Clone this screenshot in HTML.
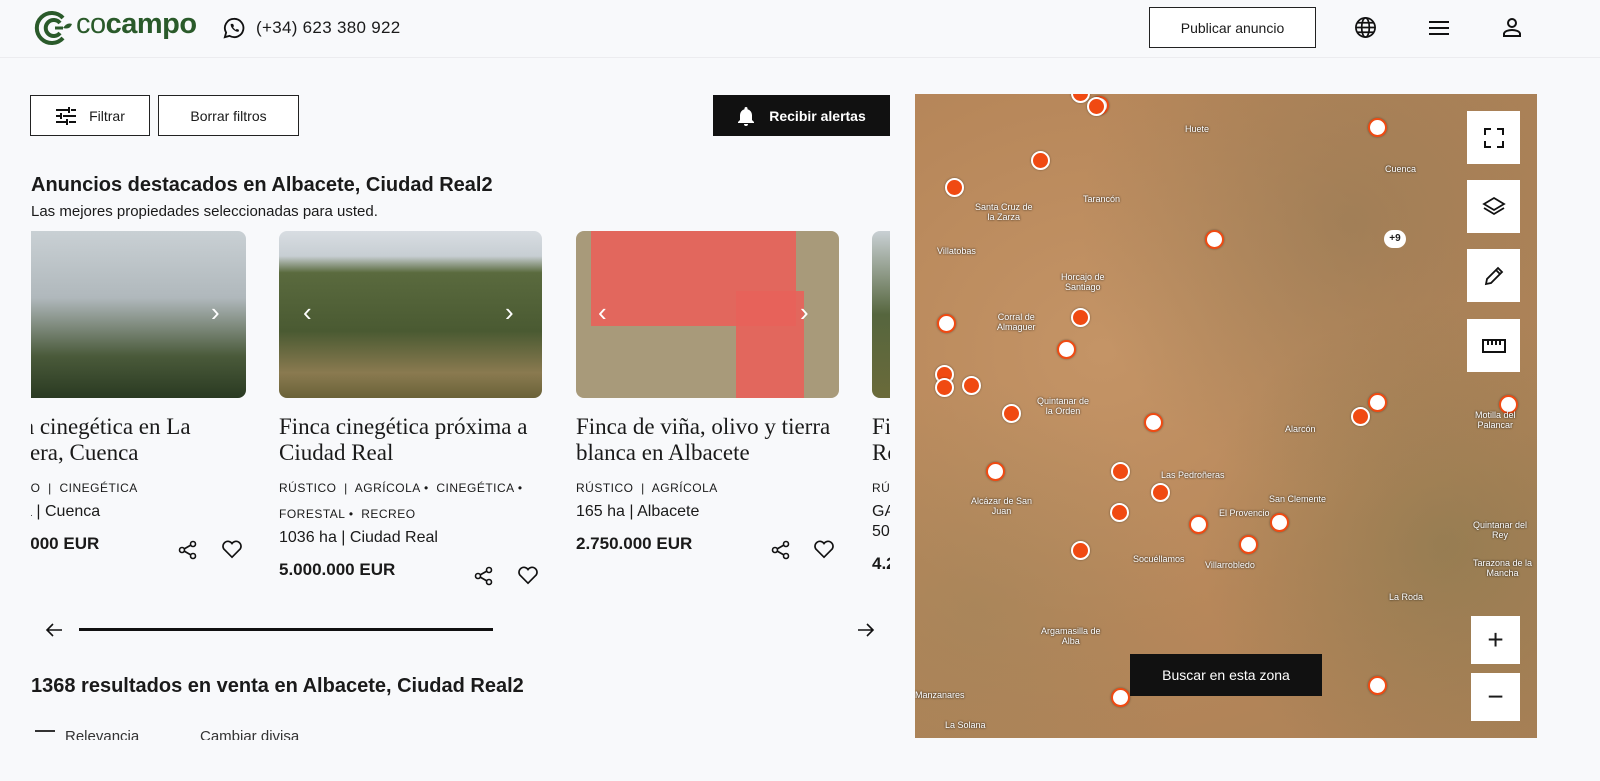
<!DOCTYPE html>
<html><head><meta charset="utf-8"><style>
*{box-sizing:border-box;margin:0;padding:0}
body{width:1600px;height:781px;overflow:hidden;background:#f8f9fb;font-family:"Liberation Sans",sans-serif;color:#1a1a1a;position:relative}
.hdr{position:absolute;left:0;top:0;width:1600px;height:58px;border-bottom:1px solid #ececef;background:#f8f9fb}
.abs{position:absolute}
.btn{position:absolute;border:1px solid #222;background:#fff;font-size:14px;display:flex;align-items:center;justify-content:center}
.card{position:absolute;top:231px;width:263px}
.img{height:167px;border-radius:8px;overflow:hidden;position:relative}
.t{font-family:"Liberation Serif",serif;font-size:23px;line-height:26px;margin-top:16px;white-space:nowrap}
.tag{font-size:12px;letter-spacing:.5px;margin-top:9px;line-height:26px}
.loc{font-size:16px;margin-top:2px}
.price{font-size:17px;font-weight:bold;margin-top:13px}
.m{position:absolute;width:19px;height:19px;border-radius:50%;background:#f04a12;border:2px solid #fff;box-shadow:0 0 2px rgba(0,0,0,.4)}
.w{background:#fff;border:2px solid #f04a12}
.lbl{position:absolute;font-size:9px;color:#fff;text-shadow:0 0 2px #000;text-align:center}
.mb{position:absolute;left:1467px;width:53px;height:53px;background:#fff;display:flex;align-items:center;justify-content:center}
.arr{position:absolute;color:#fff;font-size:26px;top:66px}
</style></head><body>
<div class="hdr">
 <svg class="abs" style="left:33px;top:9px" width="40" height="38" viewBox="0 0 40 38"><path d="M30 9A15 15 0 1 0 30 29" fill="none" stroke="#2a5a2a" stroke-width="4"/><path d="M27 14A8 8 0 1 0 27 24" fill="none" stroke="#2a5a2a" stroke-width="4"/><path d="M22 19h8" stroke="#2a5a2a" stroke-width="3"/><path d="M30 19q4-6 9-4q-2 6-9 4z" fill="#2a5a2a"/></svg>
 <div class="abs" style="left:76px;top:8px;font-size:29px;color:#2a5a2a;font-weight:bold;letter-spacing:-.5px"><span style="font-weight:normal">co</span>campo</div>
 <svg class="abs" style="left:223px;top:17px" width="22" height="22" viewBox="0 0 24 24"><path d="M12 2a10 10 0 0 0-8.6 15L2 22l5.2-1.4A10 10 0 1 0 12 2z" fill="none" stroke="#111" stroke-width="2"/><path d="M8.5 7.5c-.5 1.5.5 4 2.5 6s4.5 3 6 2.5l.5-2-2.5-1-1 1c-1-.5-2.5-2-3-3l1-1-1-2.5z" fill="#111"/></svg>
 <div class="abs" style="left:256px;top:18px;font-size:17px;letter-spacing:.3px">(+34) 623 380 922</div>
 <div class="btn" style="left:1149px;top:7px;width:167px;height:41px">Publicar anuncio</div>
 <svg class="abs" style="left:1354px;top:16px" width="23" height="23" viewBox="0 0 24 24" fill="none" stroke="#111" stroke-width="1.8"><circle cx="12" cy="12" r="10"/><ellipse cx="12" cy="12" rx="4" ry="10"/><path d="M2 12h20M3.5 7h17M3.5 17h17"/></svg>
 <svg class="abs" style="left:1428px;top:19px" width="22" height="18"><path d="M1 3h20M1 9h20M1 15h20" stroke="#111" stroke-width="2"/></svg>
 <svg class="abs" style="left:1502px;top:17px" width="20" height="20" viewBox="0 0 20 20"><circle cx="10" cy="6" r="4" fill="none" stroke="#111" stroke-width="2"/><path d="M2 19v-2c0-3 5-4 8-4s8 1 8 4v2z" fill="none" stroke="#111" stroke-width="2"/></svg>
</div>
<div class="btn" style="left:30px;top:95px;width:120px;height:41px"><svg width="22" height="18" style="margin-right:12px"><path d="M1 3h12M16 3h5M1 9h4M8 9h13M1 15h10M14 15h7M14 0v6M6 6v6M12 12v6" stroke="#111" stroke-width="2"/></svg>Filtrar</div>
<div class="btn" style="left:158px;top:95px;width:141px;height:41px">Borrar filtros</div>
<div class="btn" style="left:713px;top:95px;width:177px;height:41px;background:#111;color:#fff;border-color:#111;font-weight:bold"><svg width="18" height="20" viewBox="0 0 18 20" style="margin-right:14px"><path d="M9 1a1.5 1.5 0 0 1 1.5 1.5v.7A6 6 0 0 1 15 9v5l2 2v1H1v-1l2-2V9a6 6 0 0 1 4.5-5.8v-.7A1.5 1.5 0 0 1 9 1z M7 18h4a2 2 0 0 1-4 0z" fill="#fff"/></svg>Recibir alertas</div>
<div class="abs" style="left:31px;top:174px;font-size:20px;font-weight:bold">Anuncios destacados en Albacete, Ciudad Real2</div>
<div class="abs" style="left:31px;top:203px;font-size:15px">Las mejores propiedades seleccionadas para usted.</div>
<div class="abs" style="left:31px;top:231px;width:859px;height:360px;overflow:hidden">
 <div class="card" style="left:-48px;top:0"><div class="img" style="background:linear-gradient(#c9d0d4,#b0b8bc 40%,#4a5a3a 75%,#2a3a22)"><span class="arr" style="left:228px">›</span></div><div class="t">Finca cinegética en La<br>Toquera, Cuenca</div><div class="tag">RÚSTICO &nbsp;|&nbsp; CINEGÉTICA</div><div class="loc">500 ha | Cuenca</div><div class="price">1.000.000 EUR</div></div>
 <div class="card" style="left:248px;top:0"><div class="img" style="background:linear-gradient(#d8dde2,#c7ced3 15%,#5a6a3e 25%,#4a5a32 60%,#8a7a50 85%,#6a6238)"><span class="arr" style="left:24px">‹</span><span class="arr" style="left:226px">›</span></div><div class="t">Finca cinegética próxima a<br>Ciudad Real</div><div class="tag">RÚSTICO &nbsp;|&nbsp; AGRÍCOLA • &nbsp;CINEGÉTICA •<br>FORESTAL • &nbsp;RECREO</div><div class="loc">1036 ha | Ciudad Real</div><div class="price">5.000.000 EUR</div></div>
 <div class="card" style="left:545px;top:0"><div class="img" style="background:#a89a7a"><div class="abs" style="left:15px;top:0;width:205px;height:95px;background:#e8625a;opacity:.9"></div><div class="abs" style="left:160px;top:60px;width:68px;height:107px;background:#e8625a;opacity:.9"></div><span class="arr" style="left:22px">‹</span><span class="arr" style="left:224px">›</span></div><div class="t">Finca de viña, olivo y tierra<br>blanca en Albacete</div><div class="tag">RÚSTICO &nbsp;|&nbsp; AGRÍCOLA</div><div class="loc">165 ha | Albacete</div><div class="price">2.750.000 EUR</div></div>
 <div class="card" style="left:841px;top:0"><div class="img" style="background:linear-gradient(#c9d0d4,#56663e 50%,#6a6a3a)"></div><div class="t">Finca<br>Real</div><div class="tag">RÚSTICO</div><div class="loc">GA</div><div class="loc">500</div><div class="price">4.2</div></div>
</div>
<svg class="abs" style="left:178px;top:540px" width="20" height="20" viewBox="0 0 20 20" fill="none" stroke="#111" stroke-width="1.6"><circle cx="15" cy="4" r="2.5"/><circle cx="4" cy="10" r="2.5"/><circle cx="15" cy="16" r="2.5"/><path d="M6 9l7-4M6 11l7 4"/></svg>
<svg class="abs" style="left:221px;top:539px" width="22" height="20" viewBox="0 0 24 22"><path d="M12 20L3 11a5 5 0 0 1 9-6 5 5 0 0 1 9 6z" fill="none" stroke="#111" stroke-width="1.8"/></svg>
<svg class="abs" style="left:474px;top:566px" width="20" height="20" viewBox="0 0 20 20" fill="none" stroke="#111" stroke-width="1.6"><circle cx="15" cy="4" r="2.5"/><circle cx="4" cy="10" r="2.5"/><circle cx="15" cy="16" r="2.5"/><path d="M6 9l7-4M6 11l7 4"/></svg>
<svg class="abs" style="left:517px;top:565px" width="22" height="20" viewBox="0 0 24 22"><path d="M12 20L3 11a5 5 0 0 1 9-6 5 5 0 0 1 9 6z" fill="none" stroke="#111" stroke-width="1.8"/></svg>
<svg class="abs" style="left:771px;top:540px" width="20" height="20" viewBox="0 0 20 20" fill="none" stroke="#111" stroke-width="1.6"><circle cx="15" cy="4" r="2.5"/><circle cx="4" cy="10" r="2.5"/><circle cx="15" cy="16" r="2.5"/><path d="M6 9l7-4M6 11l7 4"/></svg>
<svg class="abs" style="left:813px;top:539px" width="22" height="20" viewBox="0 0 24 22"><path d="M12 20L3 11a5 5 0 0 1 9-6 5 5 0 0 1 9 6z" fill="none" stroke="#111" stroke-width="1.8"/></svg>
<svg class="abs" style="left:44px;top:620px" width="20" height="20"><path d="M18 10H3M9 4l-6 6 6 6" fill="none" stroke="#111" stroke-width="1.6"/></svg>
<div class="abs" style="left:79px;top:628px;width:414px;height:3px;background:#111"></div>
<svg class="abs" style="left:856px;top:620px" width="20" height="20"><path d="M2 10h15M11 4l6 6-6 6" fill="none" stroke="#111" stroke-width="1.6"/></svg>
<div class="abs" style="left:31px;top:675px;font-size:20px;font-weight:bold">1368 resultados en venta en Albacete, Ciudad Real2</div>
<div class="abs" style="left:31px;top:730px;width:400px;height:10px;overflow:hidden;font-size:15px;color:#333"><span style="position:absolute;left:4px;top:0;width:20px;height:2px;background:#333"></span><span style="position:absolute;left:34px;top:-2px">Relevancia</span><span style="position:absolute;left:169px;top:-2px">Cambiar divisa</span></div>
<div class="abs" style="left:915px;top:94px;width:622px;height:644px;overflow:hidden;background:radial-gradient(ellipse at 30% 40%,#c49466,#b7875a 50%,#a98056);">
 <div class="abs" style="left:0;top:0;width:622px;height:644px;background:radial-gradient(circle at 70% 20%,rgba(120,110,80,.35),transparent 40%),radial-gradient(circle at 85% 70%,rgba(100,110,70,.35),transparent 35%),radial-gradient(circle at 10% 80%,rgba(140,130,90,.3),transparent 30%)"></div>
 <div class="m" style="left:156px;top:-10px"></div><div class="m w" style="left:175px;top:2px"></div><div class="m" style="left:172px;top:3px"></div>
 <div class="m w" style="left:453px;top:24px"></div><div class="m" style="left:116px;top:57px"></div><div class="m" style="left:30px;top:84px"></div>
 <div class="m w" style="left:290px;top:136px"></div><div class="m" style="left:156px;top:214px"></div><div class="m w" style="left:22px;top:220px"></div>
 <div class="m w" style="left:142px;top:246px"></div><div class="m" style="left:20px;top:271px"></div><div class="m" style="left:20px;top:284px"></div><div class="m" style="left:47px;top:282px"></div>
 <div class="m" style="left:87px;top:310px"></div><div class="m w" style="left:229px;top:319px"></div><div class="m w" style="left:453px;top:299px"></div><div class="m" style="left:436px;top:313px"></div><div class="m w" style="left:584px;top:301px"></div>
 <div class="m w" style="left:71px;top:368px"></div><div class="m" style="left:196px;top:368px"></div><div class="m" style="left:236px;top:389px"></div><div class="m" style="left:195px;top:409px"></div>
 <div class="m w" style="left:274px;top:421px"></div><div class="m w" style="left:355px;top:419px"></div><div class="m w" style="left:324px;top:441px"></div><div class="m" style="left:156px;top:447px"></div>
 <div class="m w" style="left:453px;top:582px"></div><div class="m w" style="left:196px;top:594px"></div>
 <div class="abs" style="left:469px;top:136px;width:22px;height:18px;border-radius:9px;background:#fff;font-size:10px;font-weight:bold;text-align:center;line-height:18px">+9</div>
 <div class="lbl" style="left:270px;top:30px">Huete</div><div class="lbl" style="left:470px;top:70px">Cuenca</div><div class="lbl" style="left:60px;top:108px">Santa Cruz de<br>la Zarza</div><div class="lbl" style="left:168px;top:100px">Tarancón</div>
 <div class="lbl" style="left:22px;top:152px">Villatobas</div><div class="lbl" style="left:146px;top:178px">Horcajo de<br>Santiago</div><div class="lbl" style="left:82px;top:218px">Corral de<br>Almaguer</div>
 <div class="lbl" style="left:122px;top:302px">Quintanar de<br>la Orden</div><div class="lbl" style="left:560px;top:316px">Motilla del<br>Palancar</div><div class="lbl" style="left:370px;top:330px">Alarcón</div>
 <div class="lbl" style="left:246px;top:376px">Las Pedroñeras</div><div class="lbl" style="left:354px;top:400px">San Clemente</div><div class="lbl" style="left:56px;top:402px">Alcázar de San<br>Juan</div><div class="lbl" style="left:304px;top:414px">El Provencio</div>
 <div class="lbl" style="left:218px;top:460px">Socuéllamos</div><div class="lbl" style="left:290px;top:466px">Villarrobledo</div><div class="lbl" style="left:558px;top:426px">Quintanar del<br>Rey</div><div class="lbl" style="left:558px;top:464px">Tarazona de la<br>Mancha</div>
 <div class="lbl" style="left:474px;top:498px">La Roda</div><div class="lbl" style="left:126px;top:532px">Argamasilla de<br>Alba</div><div class="lbl" style="left:0;top:596px">Manzanares</div><div class="lbl" style="left:30px;top:626px">La Solana</div>
</div>
<div class="mb" style="top:111px"><svg width="20" height="20"><path d="M1 7V1h6M13 1h6v6M19 13v6h-6M7 19H1v-6" fill="none" stroke="#111" stroke-width="2"/></svg></div>
<div class="mb" style="top:180px"><svg width="24" height="22" viewBox="0 0 24 22"><path d="M12 2l10 6-10 6-10-6z M2 12l10 6 10-6" fill="none" stroke="#111" stroke-width="1.8"/></svg></div>
<div class="mb" style="top:249px"><svg width="22" height="22"><path d="M3 19l1-5L15 3l4 4L8 18z M13 5l4 4" fill="none" stroke="#111" stroke-width="1.8"/></svg></div>
<div class="mb" style="top:319px"><svg width="24" height="14"><rect x="1" y="1" width="22" height="12" fill="none" stroke="#111" stroke-width="2"/><path d="M6 1v5M10 1v5M14 1v5M18 1v5" stroke="#111" stroke-width="2"/></svg></div>
<div class="mb" style="left:1471px;top:616px;width:49px;height:48px;font-size:28px">+</div>
<div class="mb" style="left:1471px;top:673px;width:49px;height:48px;font-size:28px">−</div>
<div class="abs" style="left:1130px;top:654px;width:192px;height:42px;background:#111;color:#fff;font-size:14px;display:flex;align-items:center;justify-content:center">Buscar en esta zona</div>
</body></html>
